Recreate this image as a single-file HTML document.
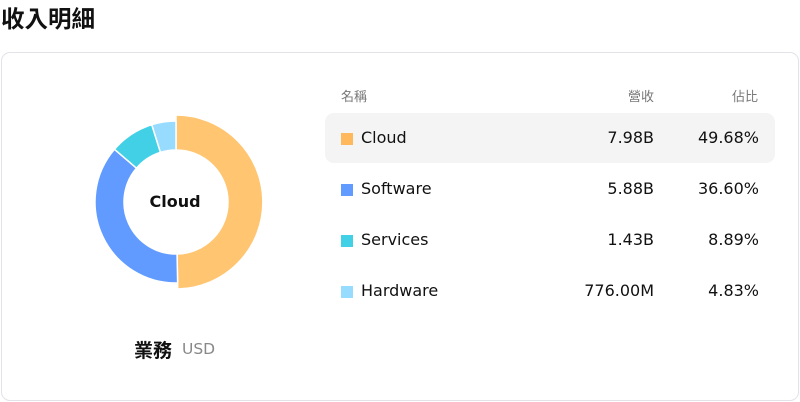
<!DOCTYPE html>
<html><head><meta charset="utf-8"><style>
body{margin:0;width:800px;height:402px;background:#fff;font-family:"Liberation Sans","DejaVu Sans","Noto Sans CJK TC",sans-serif;position:relative;overflow:hidden;color:#111}
.t{position:absolute;left:1px;top:0px;font-size:23.5px;font-weight:bold;font-family:"Noto Sans CJK TC",sans-serif}
.card{position:absolute;left:1px;top:52px;width:796px;height:347px;border:1px solid #e2e2e8;border-radius:9px}
.a{position:absolute;white-space:nowrap}
.h{font-size:13px;color:#777;top:86px;font-family:"DejaVu Sans","Noto Sans CJK TC",sans-serif}
.r{font-size:16px;font-family:"DejaVu Sans",sans-serif;color:#111}
.sq{position:absolute;width:12px;height:12px;left:341px}
.hl{position:absolute;left:325px;top:113px;width:450px;height:50px;background:#f4f4f4;border-radius:9px}
</style></head><body>
<div class="t">收入明細</div>
<div class="card"></div>
<svg class="a" style="left:0;top:0" width="800" height="402">
<g stroke="#fff" stroke-width="1.5" stroke-linejoin="round">
<path fill="#ffc571" d="M176,115 A87,87 0 0 1 177.75,288.98 L177.05,253.99 A52,52 0 0 0 176,150 Z"/>
<path fill="#619bff" d="M177.63,282.98 A81,81 0 0 1 114.49,149.30 L136.51,168.17 A52,52 0 0 0 177.05,253.99 Z"/>
<path fill="#42d0e6" d="M114.49,149.30 A81,81 0 0 1 151.78,124.71 L160.45,152.38 A52,52 0 0 0 136.51,168.17 Z"/>
<path fill="#97dcff" d="M151.78,124.71 A81,81 0 0 1 176,121 L176,150 A52,52 0 0 0 160.45,152.38 Z"/>
</g>
<text x="175" y="207" text-anchor="middle" font-family="DejaVu Sans,sans-serif" font-weight="bold" font-size="16" fill="#111">Cloud</text>
</svg>
<div class="a" style="left:134px;top:336px;font-size:19px;font-weight:bold;font-family:'Noto Sans CJK TC',sans-serif">業務</div>
<div class="a" style="left:182px;top:340px;font-size:15.5px;color:#888;font-family:'DejaVu Sans',sans-serif">USD</div>
<div class="a h" style="left:341px">名稱</div>
<div class="a h" style="right:146px">營收</div>
<div class="a h" style="right:42px">佔比</div>
<div class="hl"></div>
<div class="sq" style="top:133px;background:#ffb95c"></div>
<div class="a r" style="left:361px;top:128px">Cloud</div>
<div class="a r" style="right:146px;top:128px">7.98B</div>
<div class="a r" style="right:41px;top:128px">49.68%</div>
<div class="sq" style="top:184px;background:#619bff"></div>
<div class="a r" style="left:361px;top:179px">Software</div>
<div class="a r" style="right:146px;top:179px">5.88B</div>
<div class="a r" style="right:41px;top:179px">36.60%</div>
<div class="sq" style="top:235px;background:#42d0e6"></div>
<div class="a r" style="left:361px;top:230px">Services</div>
<div class="a r" style="right:146px;top:230px">1.43B</div>
<div class="a r" style="right:41px;top:230px">8.89%</div>
<div class="sq" style="top:286px;background:#97dcff"></div>
<div class="a r" style="left:361px;top:281px">Hardware</div>
<div class="a r" style="right:146px;top:281px">776.00M</div>
<div class="a r" style="right:41px;top:281px">4.83%</div>
</body></html>
